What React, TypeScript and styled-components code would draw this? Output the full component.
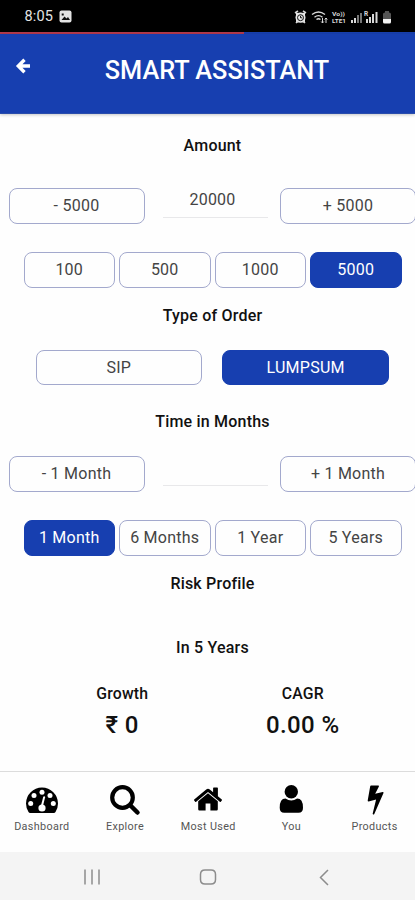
import React from "react";
import styled, { createGlobalStyle } from "styled-components";

const GlobalStyle = createGlobalStyle`
  * { box-sizing: border-box; }
  body { margin: 0; background: #fefefe; overflow: hidden; }
  button { font-family: inherit; }
`;

const Screen = styled.div`
  width: 415px;
  height: 900px;
  display: flex;
  flex-direction: column;
  overflow: hidden;
  background: #fefefe;
  color: #111;
  font-family: Roboto, "Liberation Sans", sans-serif;
`;

const StatusBar = styled.div`
  height: 32px;
  flex: none;
  background: #000;
  color: #e4e4e4;
  display: flex;
  align-items: center;
  justify-content: space-between;
  padding: 1px 22px 0 24.5px;
`;

const Clock = styled.div`
  display: flex;
  align-items: center;
  gap: 6px;
  font-size: 14.5px;
  line-height: 32px;
  letter-spacing: 0.15px;
`;

const Progress = styled.div`
  height: 2px;
  flex: none;
  background: linear-gradient(to right, #b23a4c 244px, #173fae 244px);
`;

const Header = styled.header`
  height: 80px;
  flex: none;
  background: #173fb0;
  color: #fff;
  display: flex;
  align-items: flex-start;
  border-bottom: 1px solid #2a4dab;
  box-shadow: 0 1px 3px rgba(0, 0, 0, 0.22);
`;

const BackButton = styled.button`
  border: 0;
  padding: 0;
  margin: 23px 0 0 15px;
  width: 17px;
  height: 18px;
  background: none;
  color: inherit;
`;

const Title = styled.h1`
  flex: 1;
  margin: 22px 13px 0 0;
  text-align: center;
  font-size: 25.3px;
  line-height: 30px;
  font-weight: 500;
`;

const Main = styled.main`
  flex: 1;
  display: flex;
  flex-direction: column;
`;

const Heading = styled.h2<{ $top: number }>`
  margin: ${(p) => p.$top}px 0 0;
  padding-left: 10px;
  height: 20px;
  text-align: center;
  font-size: 16px;
  line-height: 20px;
  font-weight: 500;
  letter-spacing: 0.2px;
`;

const Option = styled.button<{ $active?: boolean }>`
  height: 100%;
  min-width: 0;
  padding: 0 0 2px;
  border: 1px solid ${(p) => (p.$active ? "#173fb0" : "#a3a9cd")};
  border-radius: 8px;
  background: ${(p) => (p.$active ? "#173fb0" : "#fefefe")};
  color: ${(p) => (p.$active ? "#fff" : "#444")};
  font-size: 16px;
  letter-spacing: 0.25px;
  white-space: nowrap;
`;

const Stepper = styled.div<{ $top: number }>`
  margin-top: ${(p) => p.$top}px;
  height: 36px;
  padding-left: 8.5px;
  display: grid;
  grid-template-columns: 136px 105px 136px;
  column-gap: 18px;
  & > :last-child { margin: 0 6px 0 -6px; width: 136px; padding-left: 1px; }
`;

const Field = styled.div`
  height: 30px;
  border-bottom: 1px solid #e8e8ea;
  padding-right: 5px;
  text-align: center;
  font-size: 16px;
  line-height: 23px;
  letter-spacing: 0.2px;
  color: #444;
`;

const Presets = styled.div<{ $top: number }>`
  margin-top: ${(p) => p.$top}px;
  height: 36px;
  padding: 0 13.5px 0 23.5px;
  display: grid;
  grid-template-columns: repeat(4, 1fr);
  gap: 4px;
`;

const Orders = styled.div`
  margin-top: 24px;
  height: 35px;
  padding: 0 26px 0 35.5px;
  display: grid;
  grid-template-columns: 1fr 1fr;
  gap: 20px;
  & > * { padding-bottom: 0; }
`;

const Results = styled.div`
  margin-top: 26px;
  padding: 0 22px 0 32px;
  display: grid;
  grid-template-columns: 1fr 1fr;
  text-align: center;
`;

const ResultLabel = styled.div`
  font-size: 15.8px;
  font-weight: 500;
  line-height: 20px;
  letter-spacing: 0.2px;
`;

const ResultValue = styled.div`
  margin-top: 6px;
  font-size: 24px;
  font-weight: 500;
  line-height: 30px;
  letter-spacing: 0.4px;
`;

const Nav = styled.nav`
  height: 81px;
  flex: none;
  border-top: 1.5px solid #dcdcdc;
  display: grid;
  grid-template-columns: repeat(5, 83.2px);
`;

const NavItem = styled.div`
  display: flex;
  flex-direction: column;
  align-items: center;
  padding: 12px 0 0 0.5px;
  font-size: 10.8px;
  line-height: 14px;
  letter-spacing: 0.35px;
  color: #555;
  white-space: nowrap;
  svg { color: #000; margin-bottom: 4px; }
`;

const SystemBar = styled.div`
  height: 48px;
  flex: none;
  background: #f4f4f4;
  display: grid;
  grid-template-columns: 24px 24px 24px;
  column-gap: 92px;
  padding: 1px 0 0 80px;
  align-items: center;
`;

const PhotoIcon = () => (
  <svg width="13" height="13" viewBox="0 0 13 13">
    <rect x="0.5" y="0.5" width="12" height="12" rx="2" fill="#e4e4e4" />
    <path d="M2.5 10l3-3.5 2 2 1.5-1.5 2 3zM2.7 3.5h2v2h-2z" fill="#111" />
  </svg>
);

const StatusIcons = () => (
  <svg width="100" height="16" viewBox="293 8 100 16" fill="none" stroke="#d8d8d8">
    <g>
      <rect x="296" y="12" width="9" height="9.5" fill="#e8e8e8" stroke="none" />
      <circle cx="300.5" cy="16.5" r="5" fill="#e8e8e8" stroke="none" />
      <path d="M295 12l3-2M306 12l-3-2M296 22l2-2M305 22l-2-2" strokeWidth="1.6" />
      <circle cx="300.5" cy="16.7" r="3" stroke="#111" />
      <path d="M300.5 14.8v2h1.7" stroke="#111" />
    </g>
    <path d="M312 13.5q6.5-5 13 0M314.5 16.2q4-3.2 8 0M316.5 18.5q2-1.5 4 0" strokeWidth="1.4" />
    <path d="M322.5 17v5m-1.3-1.5l1.3 1.5 1.3-1.5M326 22v-5m-1.3 1.5L326 17l1.3 1.5" strokeWidth="1" />
    <g fill="#d8d8d8" stroke="none" fontFamily="Roboto, sans-serif" fontWeight="700">
      <text x="332" y="14.6" fontSize="6" textLength="13" lengthAdjust="spacingAndGlyphs">Vo))</text>
      <text x="332" y="22.4" fontSize="6" textLength="14" lengthAdjust="spacingAndGlyphs">LTE1</text>
      <text x="364" y="15" fontSize="6.5">R</text>
    </g>
    <g strokeWidth="2">
      <path d="M352 22v-3M355 22v-5" />
      <path d="M358 22v-8M361 22V12" stroke="#777" />
      <path d="M367 22v-4M370 22v-6M373 22V13M376.5 22V11" />
    </g>
    <path d="M383 18v-5q0-1.5 2-1.5V10h4v1.5q2 0 2 1.5v5z" fill="#555" stroke="none" />
    <path d="M383 18h8v3q0 1.5-1.5 1.5h-5Q383 22.500 383 21z" fill="#f2f2f2" stroke="none" />
  </svg>
);

const BackArrow = () => (
  <svg width="17" height="18" viewBox="0 0 17 18" fill="none" stroke="#fff" strokeWidth="3.4">
    <path d="M9.500 2.800L3.300 9l6.200 6.200M4 9h11" />
  </svg>
);

const DashboardIcon = () => (
  <svg width="34" height="32" viewBox="25 784 34 32">
    <path d="M42 787.500A16 16 0 0 0 26 803.500q0 4.600 2.500 8.500.6 1 1.700 1h23.600q1.100 0 1.700-1 2.500-3.900 2.500-8.500A16 16 0 0 0 42 787.500z" fill="currentColor" />
    <g fill="#fff">
      <circle cx="30.700" cy="803.500" r="2.500" />
      <circle cx="34" cy="795.500" r="2.500" />
      <circle cx="42" cy="792.200" r="2.500" />
      <circle cx="50" cy="795.500" r="2.500" />
      <circle cx="53.300" cy="803.500" r="2.500" />
      <circle cx="42" cy="808" r="3.600" />
      <path d="M41 805.500l2.200-8.500q.3-.9 1.200-.7t.7 1.200l-2.200 8.500z" />
    </g>
  </svg>
);

const SearchIcon = () => (
  <svg width="34" height="32" viewBox="108 784 34 32" fill="none" stroke="currentColor">
    <circle cx="122.500" cy="797.500" r="10.300" strokeWidth="4.200" />
    <path d="M130.500 805.500l7 7" strokeWidth="4.500" strokeLinecap="round" />
  </svg>
);

const HomeIcon = () => (
  <svg width="34" height="32" viewBox="191 784 34 32" fill="currentColor">
    <path d="M208 793.200l-9.800 8v8.100q0 1.200 1.200 1.200h6.200v-7h4.800v7h6.200q1.200 0 1.200-1.200v-8.100z" />
    <path d="M221.800 799.500l-3.900-3.200v-8.100q0-.7-.7-.7h-3.400q-.7 0-.7.700v4l-3.300-2.700q-1.800-1.400-3.600 0l-12 10q-.5.500 0 1l1 1.200q.5.500 1 0L208 791.900l11.800 9.800q.5.500 1 0l1-1.200q.5-.5 0-1z" />
  </svg>
);

const UserIcon = () => (
  <svg width="34" height="32" viewBox="274 784 34 32" fill="currentColor">
    <circle cx="291.300" cy="791.700" r="6.700" />
    <path d="M285.500 798.500q5.800 4 11.600 0 5.900 0 5.900 9.200 0 5-4.500 5h-14.300q-4.500 0-4.500-5 0-9.200 5.800-9.200z" />
  </svg>
);

const BoltIcon = () => (
  <svg width="34" height="32" viewBox="357 784 34 32" fill="currentColor">
    <path d="M370 785.500h7.300q.9.200.6 1l-3.700 7.300 7.500-1.700q1.100-.1.800 1l-9.200 20.800q-.4.700-1.100.5-.7-.3-.5-1l3.400-13.800-7.500 1.800q-1 0-.9-.9l2.500-14.200q.2-.8.800-.8z" />
  </svg>
);

const navItems = [
  { label: "Dashboard", Icon: DashboardIcon },
  { label: "Explore", Icon: SearchIcon },
  { label: "Most Used", Icon: HomeIcon },
  { label: "You", Icon: UserIcon },
  { label: "Products", Icon: BoltIcon },
];

const SystemIcon = ({ d }: { d: string }) => (
  <svg width="24" height="24" viewBox="0 0 24 24" fill="none" stroke="#8c8c8c" strokeWidth="1.5">
    <path d={d} />
  </svg>
);

export default function App() {
  return (
    <Screen>
      <GlobalStyle />
      <StatusBar>
        <Clock>8:05 <PhotoIcon /></Clock>
        <StatusIcons />
      </StatusBar>
      <Progress />
      <Header>
        <BackButton aria-label="Back"><BackArrow /></BackButton>
        <Title>SMART ASSISTANT</Title>
      </Header>
      <Main>
        <Heading $top={22}>Amount</Heading>
        <Stepper $top={32}>
          <Option>- 5000</Option>
          <Field>20000</Field>
          <Option>+ 5000</Option>
        </Stepper>
        <Presets $top={28}>
          {["100", "500", "1000", "5000"].map((v) => (
            <Option key={v} $active={v === "5000"}>{v}</Option>
          ))}
        </Presets>
        <Heading $top={18}>Type of Order</Heading>
        <Orders>
          <Option>SIP</Option>
          <Option $active>LUMPSUM</Option>
        </Orders>
        <Heading $top={27}>Time in Months</Heading>
        <Stepper $top={24}>
          <Option>- 1 Month</Option>
          <Field />
          <Option>+ 1 Month</Option>
        </Stepper>
        <Presets $top={28}>
          {["1 Month", "6 Months", "1 Year", "5 Years"].map((v) => (
            <Option key={v} $active={v === "1 Month"}>{v}</Option>
          ))}
        </Presets>
        <Heading $top={18}>Risk Profile</Heading>
        <Heading $top={44}>In 5 Years</Heading>
        <Results>
          <div>
            <ResultLabel>Growth</ResultLabel>
            <ResultValue>₹ 0</ResultValue>
          </div>
          <div>
            <ResultLabel>CAGR</ResultLabel>
            <ResultValue>0.00 %</ResultValue>
          </div>
        </Results>
      </Main>
      <Nav>
        {navItems.map(({ label, Icon }) => (
          <NavItem key={label}><Icon />{label}</NavItem>
        ))}
      </Nav>
      <SystemBar>
        <SystemIcon d="M5 4.500v15M12 4.500v15M19 4.500v15" />
        <SystemIcon d="M9 5h6q4.500 0 4.500 4.500v5q0 4.500-4.500 4.500H9q-4.500 0-4.500-4.500v-5Q4.500 5 9 5z" />
        <SystemIcon d="M16 5L8.500 12.500 16 20" />
      </SystemBar>
    </Screen>
  );
}
